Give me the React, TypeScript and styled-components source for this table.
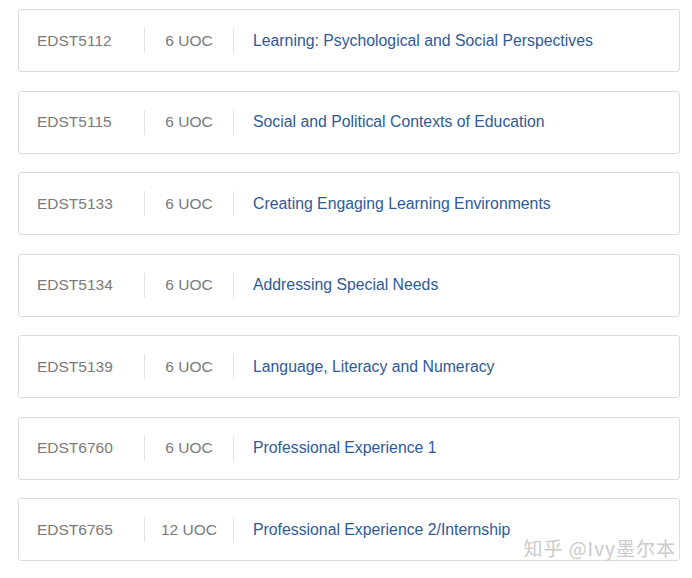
import React from "react";
import styled, { createGlobalStyle } from "styled-components";

const Global = createGlobalStyle`
  html, body { margin: 0; padding: 0; background: #ffffff; }
  body { font-family: "Liberation Sans", Arial, sans-serif; }
`;

const Page = styled.div`
  position: relative;
  width: 692px;
  height: 578px;
  box-sizing: border-box;
  padding: 9px 12px 0 18px;
  display: flex;
  flex-direction: column;
  gap: 18.5px;
  background: #fff;
`;

const Card = styled.div`
  height: 63px;
  box-sizing: border-box;
  border: 1px solid #dcdcdc;
  border-radius: 3px;
  display: grid;
  grid-template-columns: 126px 89px 1fr;
  align-items: center;
  font-size: 15.5px;
  background: #fff;
`;

const Cell = styled.div<{ $divider?: boolean; $center?: boolean }>`
  height: 25px;
  display: flex;
  align-items: center;
  justify-content: ${(p) => (p.$center ? "center" : "flex-start")};
  border-right: ${(p) => (p.$divider ? "1px solid #e2e2e2" : "none")};
  padding-left: ${(p) => (p.$center ? "0" : "18px")};
  color: #7a7a7a;
  white-space: nowrap;
`;

const Title = styled.a`
  color: #2f5a98;
  font-size: 15.8px;
  text-decoration: none;
  padding-left: 19px;
  white-space: nowrap;
`;

const Watermark = styled.div`
  position: absolute;
  right: 16px;
  bottom: 19px;
  font-family: "Noto Sans CJK SC", "Liberation Sans", sans-serif;
  font-size: 19px;
  line-height: 22px;
  color: #cacaca;
  letter-spacing: 1px;
  white-space: nowrap;
`;

const courses = [
  { code: "EDST5112", uoc: "6 UOC", title: "Learning: Psychological and Social Perspectives" },
  { code: "EDST5115", uoc: "6 UOC", title: "Social and Political Contexts of Education" },
  { code: "EDST5133", uoc: "6 UOC", title: "Creating Engaging Learning Environments" },
  { code: "EDST5134", uoc: "6 UOC", title: "Addressing Special Needs" },
  { code: "EDST5139", uoc: "6 UOC", title: "Language, Literacy and Numeracy" },
  { code: "EDST6760", uoc: "6 UOC", title: "Professional Experience 1" },
  { code: "EDST6765", uoc: "12 UOC", title: "Professional Experience 2/Internship" },
];

export default function App() {
  return (
    <>
      <Global />
      <Page>
        {courses.map((c) => (
          <Card key={c.code}>
            <Cell $divider>{c.code}</Cell>
            <Cell $divider $center>{c.uoc}</Cell>
            <Title href="#">{c.title}</Title>
          </Card>
        ))}
        <Watermark>知乎 @Ivy墨尔本</Watermark>
      </Page>
    </>
  );
}
